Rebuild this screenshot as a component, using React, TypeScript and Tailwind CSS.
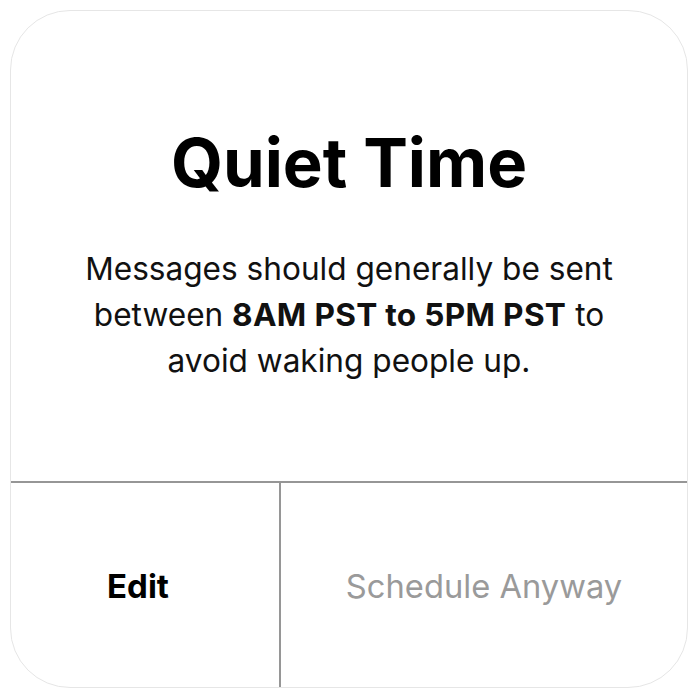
import React from "react";

export default function App() {
  return (
    <div className="w-[698px] h-[699px] bg-white p-[10px]" style={{ fontFamily: "Inter, 'Noto Sans', sans-serif" }}>
      <div className="w-[678px] h-[678px] rounded-[60px] border border-[#e6e6e6] overflow-hidden flex flex-col bg-white">
        <div className="h-[470px] flex flex-col items-center">
          <h1 className="mt-[120px] text-[67px] leading-[64px] font-bold text-black">Quiet Time</h1>
          <p className="mt-[51px] text-[31.6px] leading-[46px] text-center text-[#111]">
            Messages should generally be sent
            <br />
            between <span className="font-bold tracking-[0.3px]">8AM PST to 5PM PST</span> to
            <br />
            avoid waking people up.
          </p>
        </div>
        <div className="flex-1 flex border-t-2 border-[#969696]">
          <div className="w-[270px] border-r-2 border-[#969696] flex items-center justify-center pr-[14px] pt-[4px]">
            <span className="text-[33px] font-bold text-black">Edit</span>
          </div>
          <div className="flex-1 flex items-center justify-center pt-[4px]">
            <span className="text-[32.7px] text-[#9a9a9a]">Schedule Anyway</span>
          </div>
        </div>
      </div>
    </div>
  );
}
